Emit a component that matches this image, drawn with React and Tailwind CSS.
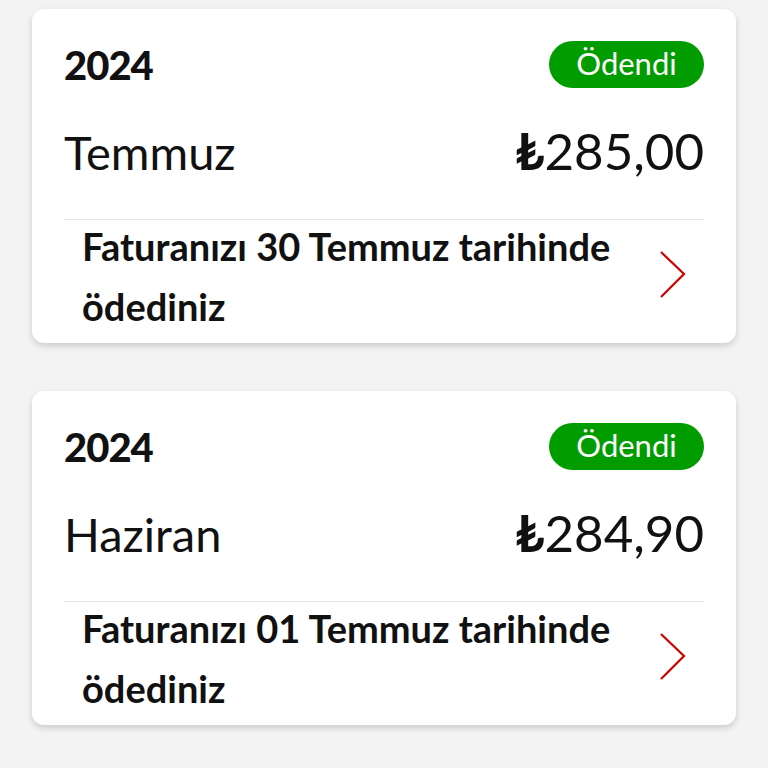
const bills = [
  { id: 1, year: "2024", month: "Temmuz", amount: "285,00", note: "Faturanızı 30 Temmuz tarihinde ödediniz" },
  { id: 2, year: "2024", month: "Haziran", amount: "284,90", note: "Faturanızı 01 Temmuz tarihinde ödediniz" },
];

const Chevron = () => (
  <svg width="30" height="50" viewBox="0 0 30 50" fill="none" className="shrink-0 mt-[-6px]">
    <path d="M3 2 L26 24 L3 47" stroke="#d10000" strokeWidth="2.2" strokeLinejoin="miter" />
  </svg>
);

const BillCard = ({ item }) => {
  return (
    <div className="bg-white rounded-xl shadow-[0_3px_6px_rgba(0,0,0,0.16)] px-8 pt-8">
      <div className="flex items-center justify-between h-[47px]">
        <span className="text-[40px] font-black text-[#111] tracking-[-1px] leading-none">{item.year}</span>
        <span className="bg-[#009c00] text-white rounded-full h-[47px] w-[155px] flex items-center justify-center text-[31px] leading-none pb-[3px]">
          Ödendi
        </span>
      </div>
      <div className="flex items-end justify-between mt-[38px] h-[50px]">
        <span className="text-[47px] font-normal text-[#111] leading-none">{item.month}</span>
        <span className="text-[51px] text-[#111] leading-none">
          <span className="font-bold">₺</span>
          {item.amount}
        </span>
      </div>
      <div className="border-t border-[#e8e8e8] mt-[43px] flex items-center justify-between pl-[18px] pr-4 pb-[7px]">
        <p className="text-[38px] font-bold text-[#111] leading-[60px] w-[555px] -mt-1">{item.note}</p>
        <Chevron />
      </div>
    </div>
  );
};

export default function App() {
  return (
    <div className="min-h-[768px] bg-[#f3f3f3] px-8 pt-[9px] flex flex-col gap-12" style={{ fontFamily: "Lato, 'Noto Sans', sans-serif" }}>
      {bills.map((item) => (
        <BillCard key={item.id} item={item} />
      ))}
    </div>
  );
}
